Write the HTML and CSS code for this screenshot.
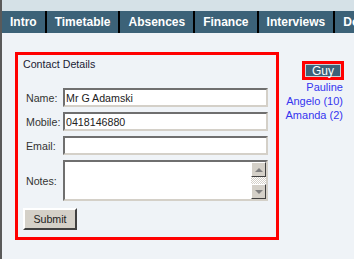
FILE: index.html
```html
<!DOCTYPE html>
<html lang="en">
<head>
  <meta charset="UTF-8" />
  <title>Contact Details</title>
  <link rel="stylesheet" href="styles.css">
</head>
<body>
  <div class="page">
    <div class="top-strip"></div>

    <div class="tabs">
      <span class="tab">Intro</span>
      <span class="tab">Timetable</span>
      <span class="tab">Absences</span>
      <span class="tab">Finance</span>
      <span class="tab">Interviews</span>
      <span class="tab">Documents</span>
    </div>

    <div class="content">
      <div class="box">
        <div class="box-title">Contact Details</div>

        <div class="form">
          <label for="name">Name:</label>
          <input type="text" id="name" value="Mr G Adamski">

          <label for="mobile">Mobile:</label>
          <input type="text" id="mobile" value="0418146880">

          <label for="email">Email:</label>
          <input type="text" id="email" value="">

          <label for="notes">Notes:</label>
          <div class="notes">
            <textarea id="notes"></textarea>
            <div class="scrollbar">
              <span class="sb-btn"><span class="arrow-up"></span></span>
              <span class="sb-track"></span>
              <span class="sb-btn"><span class="arrow-down"></span></span>
            </div>
          </div>
        </div>

        <button class="submit">Submit</button>
      </div>

      <div class="people">
        <span class="current">Guy</span>
        <a href="#">Pauline</a>
        <a href="#">Angelo (10)</a>
        <a href="#">Amanda (2)</a>
      </div>
    </div>
  </div>
</body>
</html>
```

FILE: styles.css
```css
* {
  box-sizing: border-box;
}

body {
  margin: 0;
  background: #eff3f7;
  font-family: "Liberation Sans", Arial, sans-serif;
  font-size: 8pt;
  color: #222;
}

.page {
  border-left: 2px solid #5a5a5a;
  min-height: 259px;
  overflow: hidden;
}

.top-strip {
  height: 11px;
  background: #d5e1e7;
}

.tabs {
  display: flex;
  height: 22px;
  background: #3c6278;
  white-space: nowrap;
  overflow: hidden;
}

.tab {
  padding: 0 8px;
  line-height: 22px;
  color: #fff;
  font-weight: bold;
  font-size: 12px;
  border-right: 2px solid #000;
}

.content {
  display: flex;
  justify-content: space-between;
  align-items: flex-start;
  padding: 19px 9px 0 13px;
}

/* Formulario */
.box {
  width: 264px;
  height: 188px;
  border: 3px solid #ff0000;
  padding: 2px 5px 6px 5px;
}

.box-title {
  line-height: 14px;
  margin-bottom: 17px;
  color: #1a1a33;
}

.form {
  display: grid;
  grid-template-columns: 40px 205px;
  row-gap: 5px;
  align-items: center;
}

.form label {
  padding-left: 3px;
  color: #333;
}

.form input {
  height: 19px;
  width: 205px;
  margin: 0;
  padding: 0 1px;
  font-family: inherit;
  font-size: 8pt;
  color: #222;
  background: #fff;
  border: 2px solid;
  border-color: #6f6f6f #d4d0c8 #d4d0c8 #6f6f6f;
  outline: none;
}

.notes {
  display: flex;
  height: 41px;
  width: 205px;
  background: #fff;
  border: 2px solid;
  border-color: #6f6f6f #d4d0c8 #d4d0c8 #6f6f6f;
}

.notes textarea {
  flex: 1;
  border: none;
  resize: none;
  overflow: hidden;
  outline: none;
  font-family: inherit;
  font-size: 8pt;
  padding: 1px 2px;
}

.scrollbar {
  display: flex;
  flex-direction: column;
  width: 15px;
}

.sb-btn {
  display: flex;
  align-items: center;
  justify-content: center;
  height: 15px;
  background: #d4d0c8;
  border: 1px solid;
  border-color: #fff #404040 #404040 #fff;
}

.sb-track {
  flex: 1;
  background: repeating-conic-gradient(#d4d0c8 0 25%, #fff 0 50%) 0 0 / 2px 2px;
}

.arrow-up,
.arrow-down {
  width: 0;
  height: 0;
  border-left: 4px solid transparent;
  border-right: 4px solid transparent;
}

.arrow-up {
  border-bottom: 4px solid #808080;
}

.arrow-down {
  border-top: 4px solid #808080;
}

.submit {
  display: block;
  margin-top: 7px;
  width: 54px;
  height: 22px;
  padding: 0;
  font-family: inherit;
  font-size: 8pt;
  color: #222;
  background: #d4d0c8;
  border: 2px solid;
  border-color: #fff #404040 #404040 #fff;
}

/* Lista de personas */
.people {
  display: flex;
  flex-direction: column;
  align-items: flex-end;
  margin-top: 9px;
  font-size: 11px;
}

.current {
  display: block;
  height: 19px;
  margin-right: 1px;
  padding: 1px 7px 0 7px;
  line-height: 12px;
  font-size: 12px;
  color: #fff;
  background: #3c6278;
  border: 3px solid #ff0000;
  box-shadow: inset 0 0 0 1px #c8d2d8;
}

.people a {
  color: #3535f0;
  text-decoration: none;
  line-height: 14px;
  padding-right: 2px;
}
```
